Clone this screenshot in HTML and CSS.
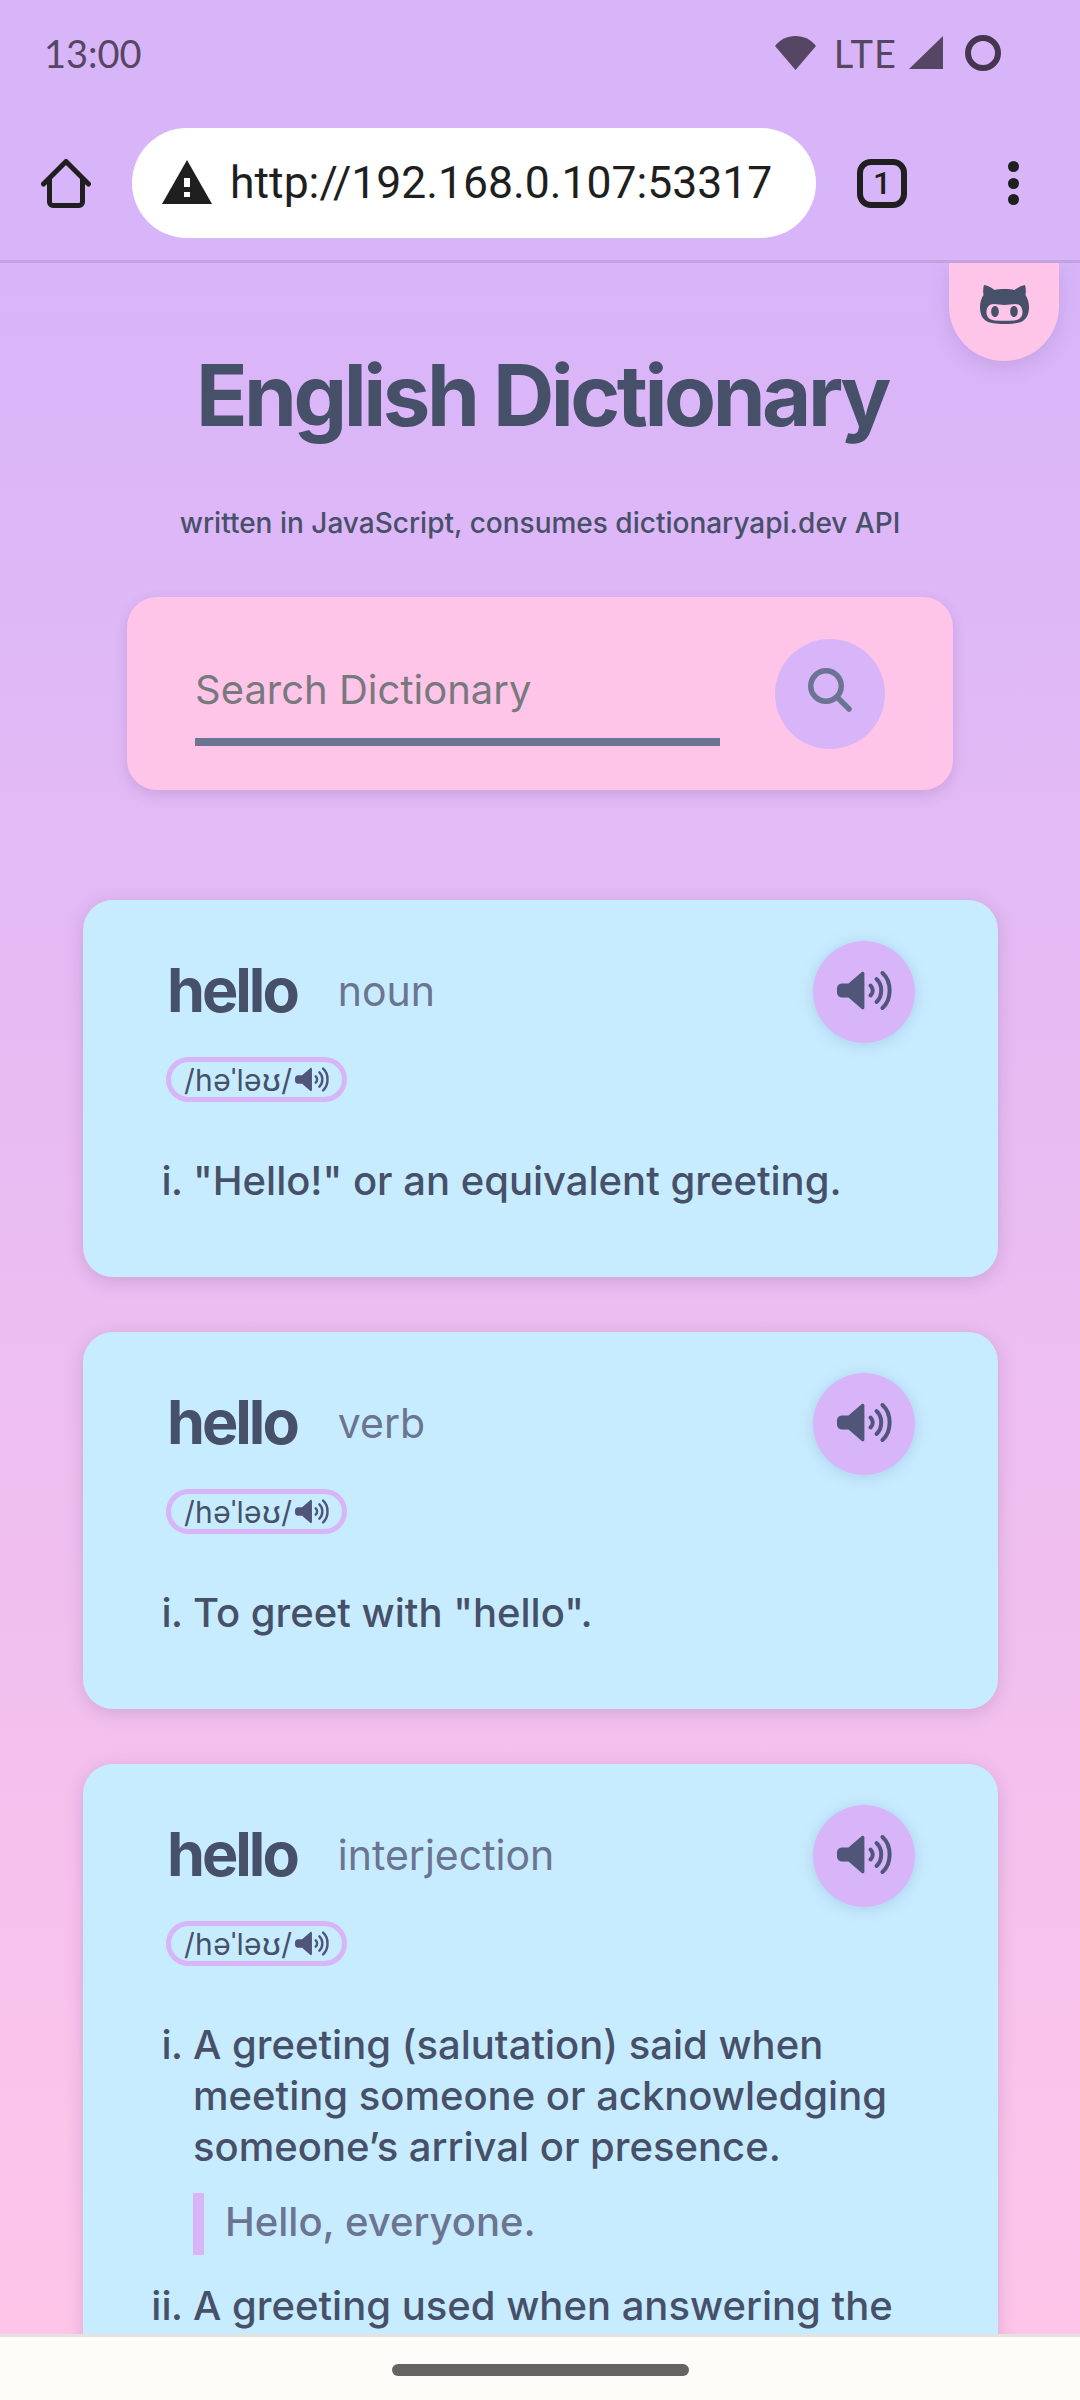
FILE: index.html
```html
<!DOCTYPE html>
<html lang="en">
<head>
<meta charset="utf-8">
<title>English Dictionary</title>
<link rel="stylesheet" href="styles.css">
</head>
<body>
<svg class="sprite" width="0" height="0" aria-hidden="true">
  <symbol id="speaker" viewBox="0 0 55 39">
    <path d="M5 12.500h6.500L24.500 1.200c1.300-1.100 2.900-.3 2.900 1.300v34c0 1.600-1.600 2.400-2.900 1.300L11.500 26.500H5c-2.800 0-5-2.200-5-5v-4c0-2.800 2.200-5 5-5z" fill="#505679"/>
    <g fill="none" stroke="#505679" stroke-width="4" stroke-linecap="round">
      <path d="M33.500 14.500c3 2.800 3 7.200 0 10"/>
      <path d="M39.500 8c6.300 5.800 6.300 17.200 0 23"/>
      <path d="M45.500 2c9.500 8.500 9.500 26.500 0 35"/>
    </g>
  </symbol>
</svg>

<header class="chrome">
  <div class="status">
    <span class="time">13:00</span>
    <div class="status-icons">
      <svg class="wifi" viewBox="0 0 41 34"><path d="M0 10C5 3.500 12 0 20.500 0S36 3.500 41 10L20.500 34z"/></svg>
      <span class="lte">LTE</span>
      <svg class="signal" viewBox="0 0 34 33"><path d="M34 0v33H0z"/></svg>
      <span class="battery"></span>
    </div>
  </div>
  <div class="toolbar">
    <svg class="home" viewBox="0 0 50 49"><path d="M2.500 25 25 2.500 47.500 25M8.500 19v24a3.500 3.500 0 0 0 3.500 3.500h26a3.500 3.500 0 0 0 3.500-3.500V19" fill="none" stroke="#1f1f1f" stroke-width="5" stroke-linecap="round" stroke-linejoin="round"/></svg>
    <div class="url">
      <svg class="warn" viewBox="0 0 50 44"><path d="M25 0 50 44H0z" fill="#1f1f1f"/><path d="M22 18h6v9h-6zM22 32h6v5h-6z" fill="#fff"/></svg>
      <span class="url-text">http://192.168.0.107:53317</span>
    </div>
    <div class="tabs">1</div>
    <div class="dots"><i></i><i></i><i></i></div>
  </div>
</header>

<main class="page">
  <a class="gh-tab" aria-label="GitHub">
    <svg viewBox="0 0 49 40"><path fill-rule="evenodd" d="M4 1c3 .2 7 2.300 10.500 5C17 5.300 20.500 5 24.500 5s7.500.3 10 1C38 3.300 42 1.200 45 1c1 3 1 7 .5 10 2.300 3.500 3.500 7.500 3.500 12 0 6-1.500 10.500-5.500 13.500-4 2.700-10.500 3.500-19 3.500s-15-.8-19-3.500C1.500 33.500 0 29 0 23c0-4.500 1.200-8.500 3.500-12C3 8 3 4 4 1zM14 20c-5 0-7.500 3.500-7.500 8s2.500 8 8 8.400c6 .5 14 .5 20 0 5.500-.4 8-3.900 8-8.400s-2.500-8-7.500-8c-3 0-6.500 1-10.500 1s-7.500-1-10.500-1zM15 22c2.200 0 3.800 2.300 3.800 5.500S17.200 33 15 33s-3.800-2.300-3.800-5.500S12.800 22 15 22zM34 22c2.200 0 3.800 2.300 3.800 5.500S36.200 33 34 33s-3.800-2.300-3.800-5.500S31.800 22 34 22z" fill="#475069"/></svg>
  </a>

  <h1 class="title">English Dictionary</h1>
  <p class="subtitle">written in JavaScript, consumes dictionaryapi.dev API</p>

  <section class="search">
    <div class="search-field">Search Dictionary</div>
    <button class="search-btn" aria-label="Search">
      <svg viewBox="0 0 44 44"><circle cx="18" cy="18" r="15.250" fill="none" stroke="#6b7490" stroke-width="5.500"/><path d="M29 29l12 12" stroke="#6b7490" stroke-width="5.500" stroke-linecap="round"/></svg>
    </button>
  </section>

  <article class="card">
    <div class="head">
      <span class="word">hello</span>
      <span class="pos">noun</span>
      <button class="audio" aria-label="Play"><svg class="audio-icon"><use href="#speaker"/></svg></button>
    </div>
    <span class="phon">/həˈləʊ/<svg class="phon-icon"><use href="#speaker"/></svg></span>
    <ol class="defs">
      <li>"Hello!" or an equivalent greeting.</li>
    </ol>
  </article>

  <article class="card">
    <div class="head">
      <span class="word">hello</span>
      <span class="pos">verb</span>
      <button class="audio" aria-label="Play"><svg class="audio-icon"><use href="#speaker"/></svg></button>
    </div>
    <span class="phon">/həˈləʊ/<svg class="phon-icon"><use href="#speaker"/></svg></span>
    <ol class="defs">
      <li>To greet with "hello".</li>
    </ol>
  </article>

  <article class="card">
    <div class="head">
      <span class="word">hello</span>
      <span class="pos">interjection</span>
      <button class="audio" aria-label="Play"><svg class="audio-icon"><use href="#speaker"/></svg></button>
    </div>
    <span class="phon">/həˈləʊ/<svg class="phon-icon"><use href="#speaker"/></svg></span>
    <ol class="defs">
      <li>A greeting (salutation) said when meeting someone or acknowledging someone’s arrival or presence.
        <blockquote class="example">Hello, everyone.</blockquote>
      </li>
      <li>A greeting used when answering the telephone.</li>
    </ol>
  </article>
</main>

<footer class="navbar"><span class="handle"></span></footer>
</body>
</html>
```

FILE: styles.css
```css
* { box-sizing: border-box; }
html, body { margin: 0; height: 2400px; overflow: hidden; }
body {
  display: flex;
  flex-direction: column;
  font-family: "Inter", "Noto Sans", sans-serif;
  color: #475069;
  background: #d8b5f9;
}
.sprite { position: absolute; }

.chrome { flex: none; height: 263px; background: #d8b5f9; border-bottom: 3px solid #c3a2e0; }
.status { height: 105px; display: flex; justify-content: space-between; align-items: center; padding: 0 79px 0 44px; color: #574663; }
.time { font: 38px "Lato", sans-serif; }
.status-icons { display: flex; align-items: center; }
.wifi { width: 41px; height: 34px; fill: #574663; }
.lte { font: 38px/40px "Lato", sans-serif; letter-spacing: 1px; margin-left: 18px; }
.signal { width: 34px; height: 33px; fill: #574663; margin-left: 12px; }
.battery { width: 36px; height: 36px; border: 6px solid #453650; border-radius: 50%; margin-left: 22px; }

.toolbar { height: 110px; margin-top: 23px; position: relative; display: flex; align-items: center; }
.home { width: 50px; height: 49px; margin-left: 41px; flex: none; }
.url { width: 684px; height: 110px; margin-left: 41px; background: #fff; border-radius: 55px; display: flex; align-items: center; padding-left: 30px; flex: none; }
.warn { width: 50px; height: 44px; flex: none; margin-bottom: 3px; }
.url-text { font: 44.5px "Roboto", sans-serif; color: #1f1f1f; margin-left: 18px; white-space: nowrap; }
.tabs { width: 50px; height: 49px; margin-left: 41px; border: 6px solid #1f1f1f; border-radius: 14px; font: 500 32px/37px "Roboto", sans-serif; color: #1f1f1f; text-align: center; flex: none; }
.dots { margin-left: 101px; display: flex; flex-direction: column; gap: 5.5px; flex: none; }
.dots i { width: 11px; height: 11px; background: #1f1f1f; border-radius: 50%; }

.page {
  flex: 1;
  min-height: 0;
  overflow: hidden;
  position: relative;
  background: linear-gradient(180deg, #d8b5f9 0%, #fec5e9 100%);
}
.gh-tab {
  position: absolute; top: 0; right: 21px;
  width: 110px; height: 98px;
  background: #fec5e9;
  border-radius: 0 0 55px 55px;
  box-shadow: 0 6px 20px rgba(71, 50, 110, .14);
  display: flex; align-items: center; justify-content: center;
}
.gh-tab svg { width: 49px; height: 40px; margin-top: -16px; }

.title { margin: 83px 0 0; padding-left: 4px; font-size: 85px; line-height: 100px; font-weight: 700; letter-spacing: -3.5px; text-align: center; }
.subtitle { margin: 57px 0 0; font-size: 28px; line-height: 40px; font-weight: 500; text-align: center; }

.search {
  width: 826px; height: 193px; margin: 54px auto 0;
  background: #fec5e9; border-radius: 30px;
  box-shadow: 0 4px 14px rgba(71, 50, 110, .16);
  display: flex; justify-content: space-between; align-items: center;
  padding: 0 68px;
}
.search-field {
  width: 525px; height: 104px;
  padding-top: 24px;
  font-size: 40px; line-height: 48px; color: #78797c;
  border-bottom: 8px solid #6b7490;
}
.search-btn { width: 110px; height: 110px; padding: 0; border: 0; border-radius: 50%; background: #d8b5f9; display: flex; align-items: center; justify-content: center; }
.search-btn svg { width: 44px; height: 44px; margin-bottom: 8px; }

.card {
  display: block;
  width: 915px; margin: 55px 0 0 83px;
  padding: 41px 83px 71px;
  background: #c8ecff; border-radius: 30px;
  box-shadow: 0 4px 18px rgba(71, 50, 110, .18);
}
.search + .card { margin-top: 110px; }
.head { display: flex; align-items: center; height: 102px; }
.word { font-size: 61px; font-weight: 700; line-height: 70px; letter-spacing: -3px; margin: 0 0 4px 1px; }
.pos { font-size: 41px; line-height: 50px; color: #6b7490; margin: 0 0 2px 41px; }
.audio { margin-left: auto; width: 102px; height: 102px; padding: 0; border: 0; border-radius: 50%; background: #d8b5f9; box-shadow: 0 2px 16px rgba(71, 110, 150, .22); display: flex; align-items: center; justify-content: center; flex: none; }
.audio-icon { width: 55px; height: 39px; margin-bottom: 3px; }

.phon {
  display: inline-flex; align-items: center;
  height: 45px; margin-top: 14px;
  padding: 0 13px;
  border: 5px solid #d8b5f9; border-radius: 23px;
  font-size: 30px; letter-spacing: .3px;
  white-space: nowrap;
}
.phon-icon { width: 34px; height: 25px; margin-left: 3px; }

.defs { list-style: lower-roman; margin: 53px 0 0; padding: 0 0 0 27px; font-size: 40px; font-weight: 500; line-height: 51px; }
.example { margin: 21px 0 25px; padding: 0 0 0 21px; height: 62px; line-height: 57px; border-left: 11px solid #d8b5f9; color: #6b7490; }

.navbar { flex: none; height: 66px; background: #fefcf9; border-top: 3px solid #e3e2e0; display: flex; justify-content: center; padding-top: 27px; }
.handle { width: 297px; height: 12px; background: #656462; border-radius: 6px; }
```
